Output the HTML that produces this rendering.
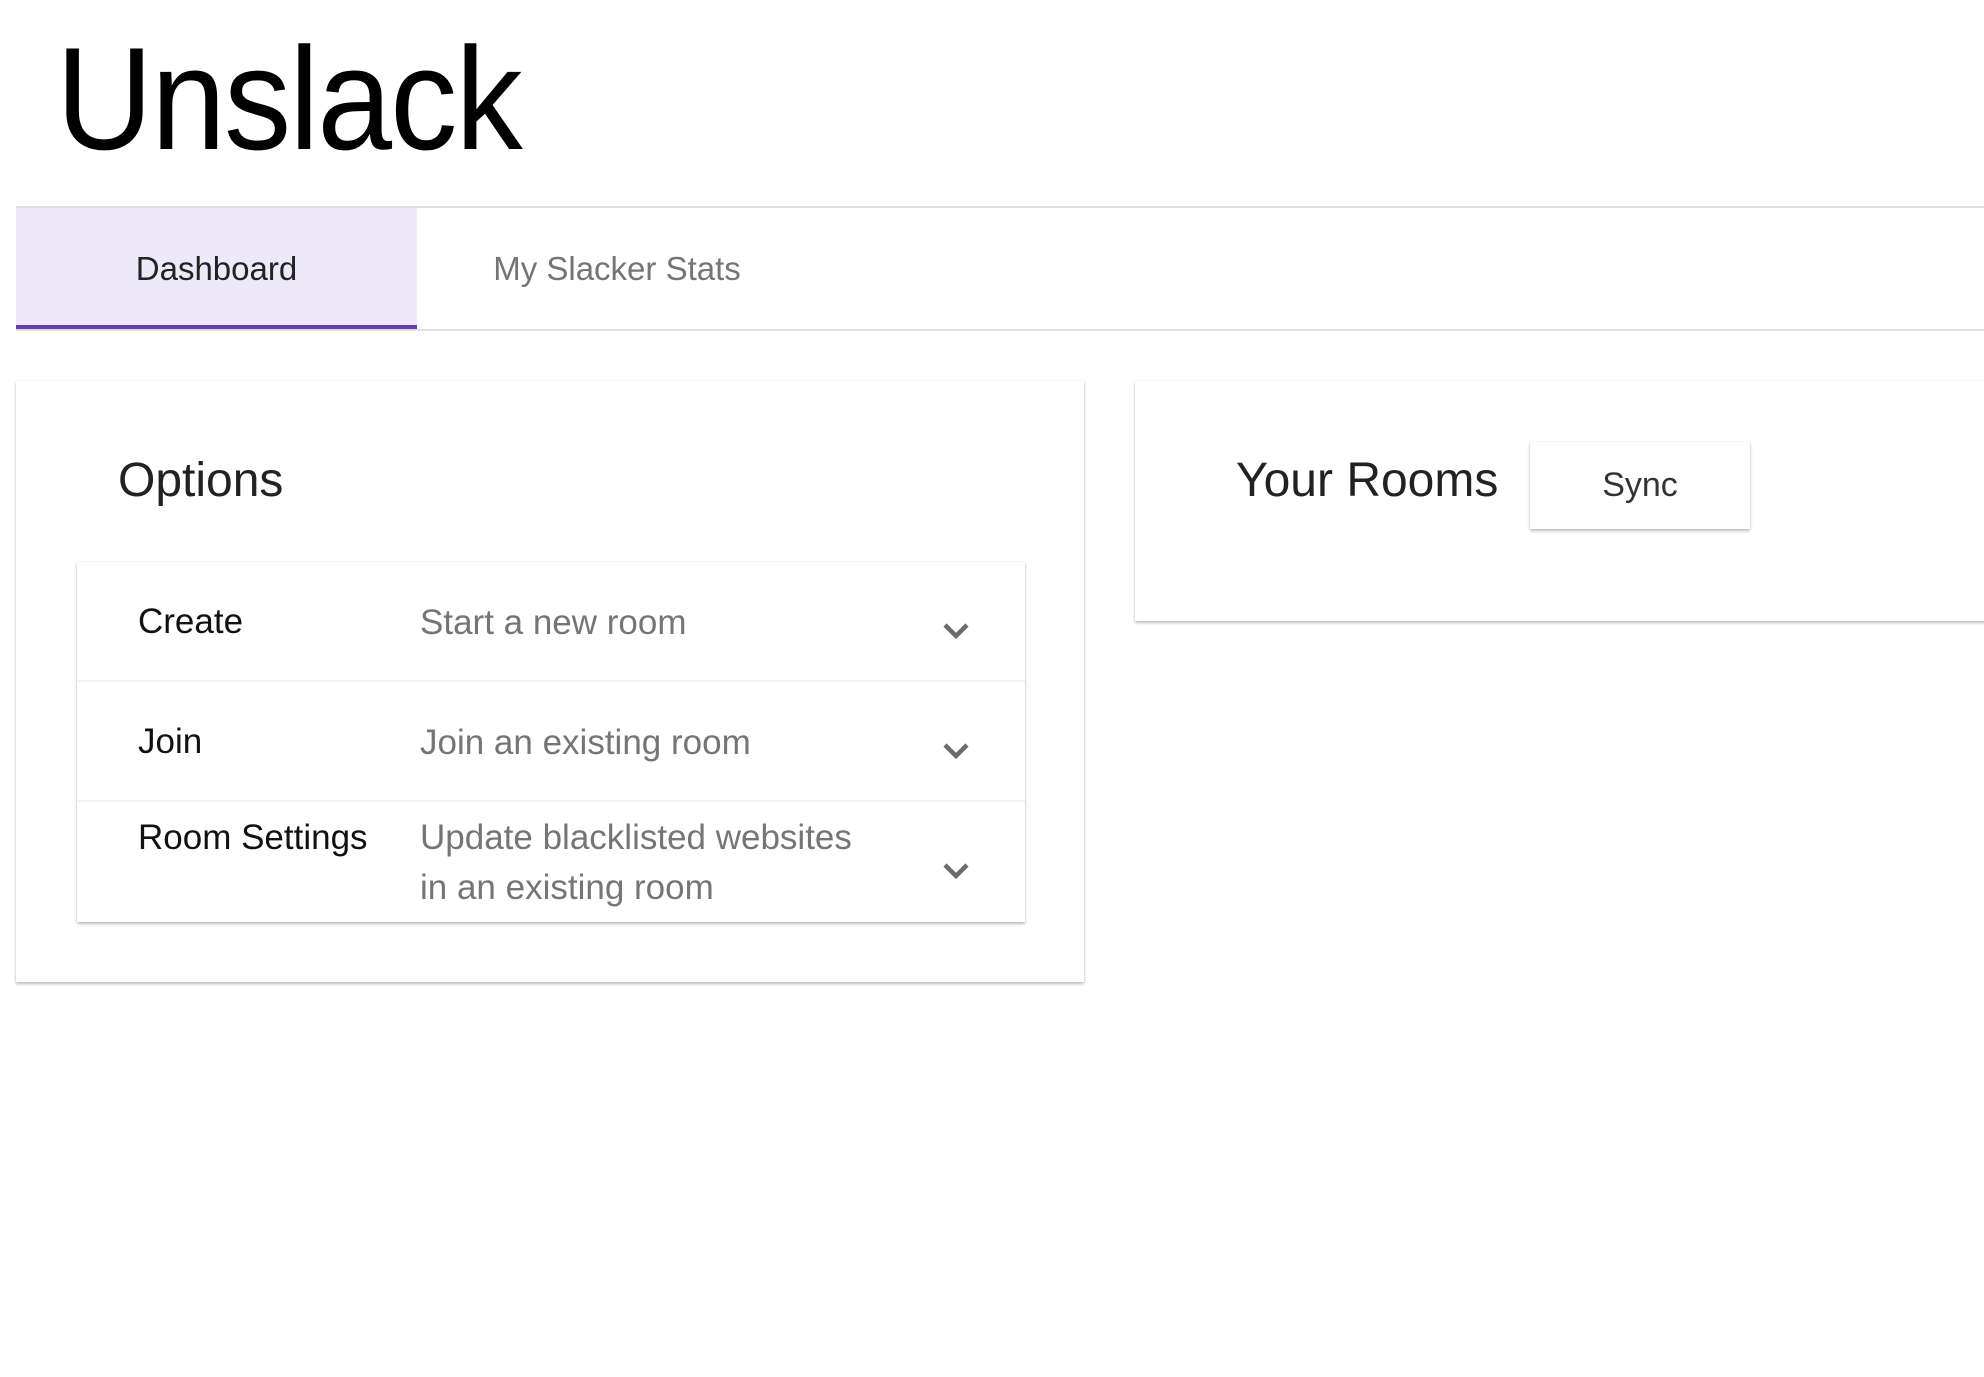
<!DOCTYPE html>
<html><head><meta charset="utf-8"><style>
*{box-sizing:border-box;margin:0;padding:0}
body{width:1984px;height:1377px;background:#fff;font-family:"Liberation Sans",sans-serif;position:relative;overflow:hidden;color:#212121}
.abs{position:absolute}
h1{position:absolute;left:56px;top:26px;font-size:146px;font-weight:normal;letter-spacing:-2px;color:#000;line-height:1;transform:scaleX(0.92);transform-origin:left top}
.tabs{left:16px;right:0;top:206px;height:125px;border-top:2px solid #e0e0e0;border-bottom:2px solid #e0e0e0}
.tab1{left:16px;top:208px;width:401px;height:121px;background:#ede9f8;border-bottom:4px solid #673ab7;text-align:center;line-height:122px;font-size:33px;color:#222}
.tab2{left:440px;top:208px;width:354px;height:121px;text-align:center;line-height:122px;font-size:33px;color:#757575}
.card{background:#fff;box-shadow:0 2px 3px rgba(0,0,0,.25),0 0 2px rgba(0,0,0,.08)}
.h{font-size:48px;color:#222}
.row{position:absolute;left:0;width:100%;border-bottom:2px solid #f2f2f2}
.lab{position:absolute;left:61px;font-size:35px;color:#111}
.desc{position:absolute;left:343px;font-size:35px;color:#757575;line-height:50px}
.chev{position:absolute;left:865px;width:28px;height:18px}
</style></head><body>
<h1>Unslack</h1>
<div class="abs tabs"></div>
<div class="abs tab1">Dashboard</div>
<div class="abs tab2">My Slacker Stats</div>

<div class="abs card" style="left:16px;top:381px;width:1068px;height:601px">
  <div class="abs h" style="left:102px;top:72px">Options</div>
  <div class="abs card" style="left:61px;top:181px;width:948px;height:360px">
    <div class="row" style="top:0;height:120px">
      <div class="lab" style="top:40px">Create</div>
      <div class="desc" style="top:36px">Start a new room</div>
      <svg class="chev" style="top:60px" viewBox="0 0 28 18"><path d="M3 3 L14 14 L25 3" fill="none" stroke="#6b6b6b" stroke-width="4.5"/></svg>
    </div>
    <div class="row" style="top:120px;height:120px">
      <div class="lab" style="top:40px">Join</div>
      <div class="desc" style="top:36px">Join an existing room</div>
      <svg class="chev" style="top:60px" viewBox="0 0 28 18"><path d="M3 3 L14 14 L25 3" fill="none" stroke="#6b6b6b" stroke-width="4.5"/></svg>
    </div>
    <div class="row" style="top:240px;height:120px;border:none">
      <div class="lab" style="top:16px">Room Settings</div>
      <div class="desc" style="top:11px">Update blacklisted websites<br>in an existing room</div>
      <svg class="chev" style="top:60px" viewBox="0 0 28 18"><path d="M3 3 L14 14 L25 3" fill="none" stroke="#6b6b6b" stroke-width="4.5"/></svg>
    </div>
  </div>
</div>

<div class="abs card" style="left:1135px;top:381px;width:900px;height:240px">
  <div class="abs h" style="left:101px;top:72px">Your Rooms</div>
  <div class="abs card" style="left:395px;top:61px;width:220px;height:87px;text-align:center;line-height:87px;font-size:34px;color:#333">Sync</div>
</div>
</body></html>
